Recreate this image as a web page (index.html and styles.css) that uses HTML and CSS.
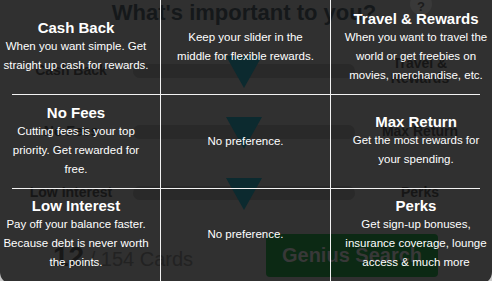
FILE: index.html
```html
<!DOCTYPE html>
<html>
<head>
<meta charset="utf-8">
<link rel="stylesheet" href="styles.css">
</head>
<body>
<div class="card">
  <div class="page">
    <div class="title-row">
      <h1 class="title">What's important to you?</h1>
      <span class="help">?</span>
    </div>
    <div class="slider-row">
      <div class="lbl">Cash Back</div>
      <div class="track"><span class="thumb"></span></div>
      <div class="lbl">Travel &amp;<br>Rewards</div>
    </div>
    <div class="slider-row">
      <div class="lbl">No Fees</div>
      <div class="track"><span class="thumb"></span></div>
      <div class="lbl">Max Return</div>
    </div>
    <div class="slider-row">
      <div class="lbl">Low Interest</div>
      <div class="track"><span class="thumb"></span></div>
      <div class="lbl">Perks</div>
    </div>
    <div class="footer">
      <div class="count"><b class="count-num">12</b> / 154 Cards</div>
      <div class="btn">Genius Search</div>
    </div>
  </div>
  <div class="overlay">
    <div class="cell c1">
      <div class="hd">Cash Back</div>
      <p class="tx">When you want simple. Get straight up cash for rewards.</p>
    </div>
    <div class="cell c2">
      <p class="tx">Keep your slider in the middle for flexible rewards.</p>
    </div>
    <div class="cell c3">
      <div class="hd">Travel &amp; Rewards</div>
      <p class="tx">When you want to travel the world or get freebies on movies, merchandise, etc.</p>
    </div>
    <div class="cell c1 sep">
      <div class="hd">No Fees</div>
      <p class="tx">Cutting fees is your top priority. Get rewarded for free.</p>
    </div>
    <div class="cell c2 sep">
      <p class="tx">No preference.</p>
    </div>
    <div class="cell c3 sep">
      <div class="hd">Max Return</div>
      <p class="tx">Get the most rewards for your spending.</p>
    </div>
    <div class="cell c1 sep">
      <div class="hd">Low Interest</div>
      <p class="tx">Pay off your balance faster. Because debt is never worth the points.</p>
    </div>
    <div class="cell c2 sep">
      <p class="tx">No preference.</p>
    </div>
    <div class="cell c3 sep">
      <div class="hd">Perks</div>
      <p class="tx">Get sign-up bonuses, insurance coverage, lounge access &amp; much more</p>
    </div>
  </div>
</div>
</body>
</html>
```

FILE: styles.css
```css
html, body {
  margin: 0;
  padding: 0;
}
body {
  background: #c8c8c8;
  font-family: "Liberation Sans", Arial, sans-serif;
  width: 492px;
  height: 281px;
  overflow: hidden;
}
.card {
  position: relative;
  width: 492px;
  height: 284px;
  background: #303030;
  border-radius: 0 0 12px 12px;
  overflow: hidden;
}
.page {
  display: flex;
  flex-direction: column;
}
.title-row {
  position: relative;
  height: 26px;
  margin-bottom: 14px;
}
.title {
  margin: 0;
  font-size: 22px;
  line-height: 26px;
  font-weight: bold;
  color: #15181a;
  text-align: center;
  padding-left: 0;
  margin-left: -4px;
}
.help {
  position: absolute;
  left: 410px;
  top: -7px;
  width: 22px;
  height: 22px;
  border-radius: 50%;
  background: #393939;
  color: #1c1c1c;
  font-size: 13px;
  font-weight: bold;
  line-height: 28px;
  text-align: center;
}
.slider-row {
  display: grid;
  grid-template-columns: 118px 222px 122px;
  column-gap: 3px;
  align-items: center;
  height: 61px;
  padding-left: 12px;
}
.slider-row .lbl:last-child {
  margin-left: 2px;
}
.lbl {
  text-align: center;
  font-size: 14px;
  font-weight: bold;
  line-height: 15px;
  color: #161616;
}
.track {
  position: relative;
  height: 14px;
  border-radius: 7px;
  background: #292929;
}
.thumb {
  position: absolute;
  left: 50%;
  top: -8px;
  transform: translateX(-50%);
  width: 0;
  height: 0;
  border-left: 18.5px solid transparent;
  border-right: 18.5px solid transparent;
  border-top: 32px solid #0c2a2f;
}
.footer {
  display: flex;
  align-items: flex-start;
  margin-top: 11px;
  padding-left: 53px;
  gap: 81px;
}
.count {
  width: 132px;
  padding-top: 3px;
  line-height: 40px;
  font-size: 20px;
  color: #222222;
  white-space: nowrap;
}
.count-num {
  font-size: 28px;
  color: #181818;
}
.btn {
  width: 172px;
  height: 43px;
  border-radius: 4px;
  background: #0c2914;
  color: #383838;
  font-size: 20px;
  font-weight: bold;
  line-height: 43px;
  text-align: center;
}
.overlay {
  position: absolute;
  left: 0;
  top: 0;
  width: 492px;
  height: 281px;
  display: grid;
  grid-template-columns: 161px 170px 161px;
  grid-template-rows: 94px 94px 93px;
  color: #ffffff;
}
.cell {
  position: relative;
  display: flex;
  flex-direction: column;
  justify-content: center;
  align-items: center;
  text-align: center;
  box-sizing: border-box;
}
.c1 {
  padding: 0 9px 0 1px;
  border-right: 1px solid #f2f2f2;
}
.c2 {
  padding: 0 12px;
  border-right: 1px solid #f2f2f2;
}
.c3 {
  padding: 0 2px 0 11px;
}
.sep::before {
  content: "";
  position: absolute;
  top: 0;
  left: 0;
  right: 0;
  height: 1px;
  background: #f2f2f2;
}
.c1.sep::before {
  left: 12px;
}
.c3.sep::before {
  right: 12px;
}
.hd {
  font-size: 15px;
  font-weight: bold;
  line-height: 18px;
}
.tx {
  margin: 0;
  font-size: 11.5px;
  line-height: 19px;
}
```
